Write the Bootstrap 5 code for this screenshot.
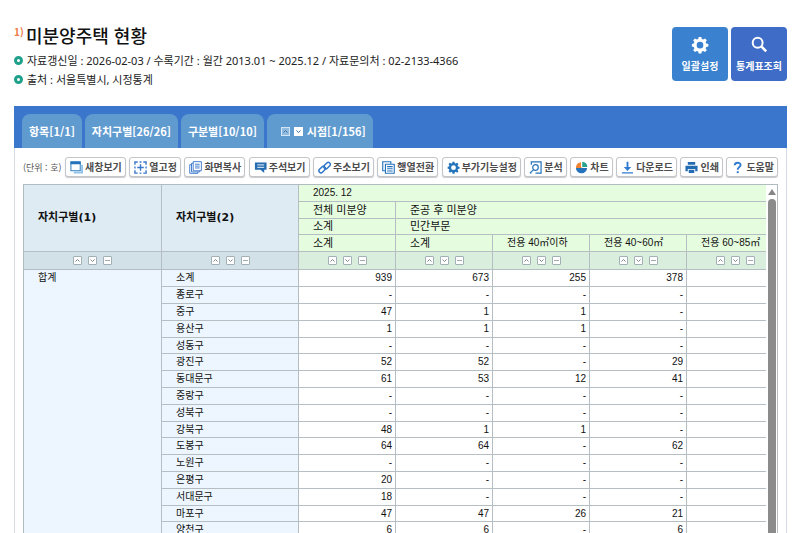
<!DOCTYPE html>
<html lang="ko">
<head>
<meta charset="utf-8">
<meta name="viewport" content="width=device-width, initial-scale=1">
<title>미분양주택 현황</title>
<link href="https://cdn.jsdelivr.net/npm/bootstrap@5.3.0/dist/css/bootstrap.min.css" rel="stylesheet">
<style>
body{font-family:"Noto Sans CJK KR",sans-serif;font-size:11px;line-height:19px;color:#222;background:#fff}
.page{padding:23px 13px 0 14px}
.stat-title{font-size:18px;line-height:24px;font-weight:500;color:#111}
.note-no{font-size:10px;line-height:18px;font-weight:700;color:#ee7c45;width:12px}
.info{font-family:"Noto Sans","Noto Sans CJK KR",sans-serif;padding:4px 0 17px}
.info li{display:flex;align-items:center;gap:4px}
.ring{width:9px;height:9px;border:3px solid #1fa08a;border-radius:50%;flex:none}
.actions{gap:3px;padding-top:4px}
.big{width:56px;height:54px;border:0;border-radius:4px;color:#fff;font-size:10px;line-height:14px;font-weight:700;background:#3a82cf;padding:0;gap:5px}
.big svg{width:18px;height:18px}
.big.search{background:#3f6cc6}
.tabbar{background:#3a76cb;padding:8px 8px 0;gap:3px}
.tabbar a{background:#5f9bcf;color:#fff;font-weight:700;line-height:34px;border-radius:8px 8px 0 0;padding:0 7px;text-decoration:none;white-space:nowrap}
.period{background:#5f9bcf;border-radius:8px 8px 0 0;padding-left:14px;gap:4px}
.period a{padding-left:0}
.step{width:9px;height:9px;padding:0;border:1px solid #fff;background:#fff;color:#2d6db1;display:flex}
.step.off{background:#8fbbe0;border-color:#d3e5f5;color:#40709f}
.panel{border:1px solid #d3dae3;border-top:0;border-bottom:0;padding:9px 8px 0;min-height:0}
.tools{margin-bottom:7px}
.unit{font-size:9px;color:#555;white-space:nowrap}
.tool{height:20px;border:1px solid #c3c5c9;border-radius:3px;background:#fff;box-shadow:0 1px 1px #c9cacc;color:#4c4c4c;font-size:10px;line-height:18px;font-weight:700;padding:0 3px 0 4px;gap:2px;white-space:nowrap}
.tool svg{width:13px;height:13px;flex:none;color:#2473ba}
.grid-box{border:1px solid #b0bcc1;border-bottom:0;min-height:0}
.grid-view{overflow:hidden;min-width:0}
.stats{border-collapse:separate;border-spacing:0;table-layout:fixed;width:760px;font-family:"Liberation Sans","Noto Sans CJK KR",sans-serif;font-size:10px;color:#111}
.stats th,.stats td{border-right:1px solid #b5bfc3;border-bottom:1px solid #b5bfc3;padding:0;height:17px;line-height:16px;white-space:nowrap;overflow:hidden}
.stats th{font-weight:400;text-align:left;padding-left:14px}
.stats thead th{font-size:11px;background:#e6fcdf}
.stats thead th.fine{font-size:10px}
.stats thead th.key{font-family:"DejaVu Sans","Noto Sans CJK KR",sans-serif;font-weight:700;background:#dfebf3}
.stats thead tr:nth-child(3) th{height:16px;line-height:15px}
.stats thead td{height:18px;background:#d9eedd}
.stats thead td.key{background:#d2e0e8}
.stats tbody th{background:#edf6fe;vertical-align:top}
.stats tbody td{text-align:right;padding-right:3px}
.stats tbody tr:nth-child(5n) > *{height:16px;line-height:15px}
.group-col{width:138px}
.area-col{width:137px}
.sorts{gap:6px}
.sorts button{width:9px;height:9px;padding:0;border:1px solid #a3b0b5;border-radius:1px;background:#fff;color:#7d888c;display:flex}
.sorts svg,.step svg{width:7px;height:7px}
.bar{width:11px;padding:4px 1px 0 2px;gap:4px;flex:none;background:#fff}
.bar i{height:6px;background:#868686;clip-path:polygon(50% 0,100% 100%,0 100%)}
.bar span{background:#8b8b8b;border-radius:4px 4px 0 0}
</style>
</head>
<body>
<svg class="d-none" aria-hidden="true">
<symbol id="up" viewBox="0 0 7 7"><path d="M1.5 4.5l2-2 2 2" fill="none" stroke="currentColor"/></symbol>
<symbol id="down" viewBox="0 0 7 7"><path d="M1.5 2.5l2 2 2-2" fill="none" stroke="currentColor"/></symbol>
<symbol id="flat" viewBox="0 0 7 7"><path d="M1 3.500h5" stroke="currentColor" stroke-opacity=".7"/></symbol>
<symbol id="gear" viewBox="0 0 20 20"><path fill="currentColor" fill-rule="evenodd" d="M8.500 1h3l.5 2.400 1.500.6 2-1.300 2.100 2.100L16.300 6.800l.6 1.500 2.400.5v3l-2.400.5-.6 1.500 1.300 2-2.100 2.100-2-1.300-1.500.6-.5 2.300h-3l-.5-2.300-1.500-.6-2 1.300-2.100-2.100 1.300-2-.6-1.500L1 11.800v-3l2.100-.5.6-1.500-1.300-2 2.100-2.100 2 1.300L8 3.400zM10 6.500a3.700 3.700 0 1 0 0 7.400A3.700 3.700 0 0 0 10 6.500z"/></symbol>
</svg>
<main class="page vh-100 overflow-hidden d-flex flex-column">
  <header class="d-flex justify-content-between align-items-start">
    <div>
      <div class="d-flex"><span class="note-no">1)</span><h1 class="stat-title mb-0">미분양주택 현황</h1></div>
      <ul class="info list-unstyled mb-0">
        <li><span class="ring"></span>자료갱신일 : 2026-02-03 / 수록기간 : 월간 2013.01 ~ 2025.12 / 자료문의처 : 02-2133-4366</li>
        <li><span class="ring"></span>출처 : 서울특별시, 시정통계</li>
      </ul>
    </div>
    <div class="actions d-flex">
      <button type="button" class="big d-flex flex-column align-items-center justify-content-center"><svg><use href="#gear"/></svg>일괄설정</button>
      <button type="button" class="big search d-flex flex-column align-items-center justify-content-center"><svg viewBox="0 0 20 20" fill="none" stroke="currentColor"><circle cx="8.500" cy="7.500" r="5.500" stroke-width="2.200"/><path d="M12.300 11.300l5.700 5.700" stroke-width="2.800"/></svg>통계표조회</button>
    </div>
  </header>
  <nav class="tabbar d-flex">
    <a href="#">항목[1/1]</a><a href="#">자치구별[26/26]</a><a href="#">구분별[10/10]</a>
    <div class="period d-flex align-items-center"><button type="button" class="step off" aria-label="이전 시점"><svg><use href="#up"/></svg></button><button type="button" class="step" aria-label="다음 시점"><svg><use href="#down"/></svg></button><a href="#">시점[1/156]</a></div>
  </nav>
  <section class="panel flex-grow-1 d-flex flex-column">
    <div class="tools d-flex justify-content-between align-items-center">
      <span class="unit">(단위 : 호)</span>
      <button type="button" class="tool d-flex align-items-center"><svg viewBox="0 0 14 14"><path d="M4 12.500h9V4" fill="none" stroke="#8fc3ea" stroke-width="2"/><rect x="1" y="1" width="10" height="9.500" fill="#fff" stroke="#2473ba"/><path d="M.5.5h11v3H.5z" fill="#2473ba"/></svg>새창보기</button>
      <button type="button" class="tool d-flex align-items-center"><svg viewBox="0 0 14 14" fill="none" stroke="#3b78cc" stroke-width="1.500"><path d="M1 4V1h3M6 1h2M10 1h3v3M13 6v2M13 10v3h-3M8 13H6M4 13H1v-3M1 8V6M7 3.500v7M3.500 7h7"/></svg>열고정</button>
      <button type="button" class="tool d-flex align-items-center"><svg viewBox="0 0 14 14" fill="none" stroke="#3b78cc"><path d="M4.500.7h8.800v9.800H4.500zM4.500 2.500H2.700v9.300h8.800v-1.300M2.700 4H.8v9.300h8.700v-1.500M6.500 3.500h5M6.500 5.500h5M6.500 7.500h5"/></svg>화면복사</button>
      <button type="button" class="tool d-flex align-items-center"><svg viewBox="0 0 14 14"><path d="M1 1.500h12.500v8H11V13L7 9.500H1z" fill="#236cb1"/><path d="M3.500 4.200h7.500M3.500 6.800h7.500" stroke="#fff"/></svg>주석보기</button>
      <button type="button" class="tool d-flex align-items-center"><svg viewBox="0 0 14 14" fill="none" stroke="#2f77c8" stroke-width="1.600"><rect x="5.800" y="2.700" width="8" height="4.400" rx="2.200" transform="rotate(-45 9.800 4.900)"/><rect x=".5" y="7" width="8" height="4.400" rx="2.200" transform="rotate(-45 4.500 9.200)"/></svg>주소보기</button>
      <button type="button" class="tool d-flex align-items-center"><svg viewBox="0 0 14 14" fill="none" stroke="#2473ba" stroke-width="1.200"><path d="M3.500 10.500H.8V.8h8.700v2.500M3.700 3.500h9.500v9.700H3.700zM5.500 6h6M5.500 8.300h6M5.500 10.700h6"/></svg>행열전환</button>
      <button type="button" class="tool d-flex align-items-center"><svg><use href="#gear"/></svg>부가기능설정</button>
      <button type="button" class="tool d-flex align-items-center"><svg viewBox="0 0 14 14" fill="none" stroke="#2473ba" stroke-width="1.300"><path d="M2.500 4V1h10.500v12H7M2.500 13h-1"/><circle cx="7" cy="7" r="3"/><path d="M5 9.300L1 13"/></svg>분석</button>
      <button type="button" class="tool d-flex align-items-center"><svg viewBox="0 0 14 14"><path d="M7 7.500h6a6 5.800 0 0 1-12 0z" fill="#2473ba"/><path d="M1 7.500h7V7H6.500V1.300A5.700 5.700 0 0 0 1 7z" fill="#f08432"/><path d="M7.800 6.500V.8a5.600 5.600 0 0 1 5.500 5.700z" fill="#27a08c"/></svg>차트</button>
      <button type="button" class="tool d-flex align-items-center"><svg viewBox="0 0 14 14"><path d="M6 .8h2v5.700h3L7 10.700 3 6.500h3zM1 12h12v1.500H1z" fill="#2f7bd0"/></svg>다운로드</button>
      <button type="button" class="tool d-flex align-items-center"><svg viewBox="0 0 14 14"><path d="M3 1h8v3H3zM.5 5h13v6H11V8.500H3V11H.5zM4 9.500h6V13H4z" fill="#236cb1"/></svg>인쇄</button>
      <button type="button" class="tool d-flex align-items-center"><svg viewBox="0 0 14 14"><path d="M4 4.500C4 1 10.300 1 10.300 4.300 10.300 6.500 7.200 6.700 7.200 9.300" fill="none" stroke="#2f7bd0" stroke-width="2"/><path d="M6.200 11h2.100v2.100H6.200z" fill="#2f7bd0"/></svg>도움말</button>
    </div>
    <div class="grid-box d-flex flex-grow-1">
      <div class="grid-view flex-grow-1">
        <table class="stats">
          <colgroup><col class="group-col"><col class="area-col"><col><col><col><col><col></colgroup>
          <thead>
            <tr><th rowspan="4" class="key">자치구별(1)</th><th rowspan="4" class="key">자치구별(2)</th><th colspan="5" class="fine">2025. 12</th></tr>
            <tr><th>전체 미분양</th><th colspan="4">준공 후 미분양</th></tr>
            <tr><th>소계</th><th colspan="4">민간부문</th></tr>
            <tr><th>소계</th><th>소계</th><th class="fine">전용 40㎡이하</th><th class="fine">전용 40~60㎡</th><th class="fine">전용 60~85㎡</th></tr>
            <tr id="sortRow"></tr>
          </thead>
          <tbody id="rows"></tbody>
        </table>
      </div>
      <div class="bar d-flex flex-column"><i></i><span class="flex-grow-1"></span></div>
    </div>
  </section>
</main>
<script src="https://cdn.jsdelivr.net/npm/bootstrap@5.3.0/dist/js/bootstrap.bundle.min.js"></script>
<script>
const sorts = [['up','오름차순'],['down','내림차순'],['flat','정렬 해제']]
  .map(([id, label]) => `<button type="button" aria-label="${label}"><svg><use href="#${id}"/></svg></button>`).join('');
document.getElementById('sortRow').innerHTML = Array.from({length: 7}, (_, i) =>
  `<td class="${i < 2 ? 'key' : ''}"><div class="sorts d-flex justify-content-center">${sorts}</div></td>`).join('');
const data = [
  ['소계',939,673,255,378],['종로구','-','-','-','-'],['중구',47,1,1,'-'],['용산구',1,1,1,'-'],
  ['성동구','-','-','-','-'],['광진구',52,52,'-',29],['동대문구',61,53,12,41],['중랑구','-','-','-','-'],
  ['성북구','-','-','-','-'],['강북구',48,1,1,'-'],['도봉구',64,64,'-',62],['노원구','-','-','-','-'],
  ['은평구',20,'-','-','-'],['서대문구',18,'-','-','-'],['마포구',47,47,26,21],['양천구',6,6,'-',6]
];
document.getElementById('rows').innerHTML = data.map(([name, ...v], i) =>
  `<tr>${i ? '' : `<th rowspan="${data.length}">합계</th>`}<th>${name}</th>${v.map(n => `<td>${n}</td>`).join('')}<td></td></tr>`).join('');
</script>
</body>
</html>
